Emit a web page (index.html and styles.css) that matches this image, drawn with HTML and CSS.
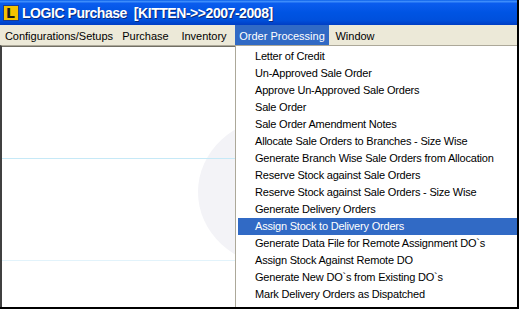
FILE: index.html
```html
<!DOCTYPE html>
<html lang="en">
<head>
    <meta charset="UTF-8">
    <title>LOGIC Purchase</title>
    <link rel="stylesheet" href="styles.css">
</head>
<body>
    <div class="window">
        <div class="title-bar">
            <div class="app-icon"><span>L</span></div>
            <span class="title-text">LOGIC Purchase&nbsp; [KITTEN-&gt;&gt;2007-2008]</span>
        </div>
        <div class="menu-bar">
            <div class="menu-item setups">Configurations/Setups</div>
            <div class="menu-item purchase">Purchase</div>
            <div class="menu-item inventory">Inventory</div>
            <div class="menu-item orders active">Order Processing</div>
            <div class="menu-item window-menu">Window</div>
        </div>
        <div class="client">
            <div class="watermark"></div>
            <div class="rule first"></div>
            <div class="rule second"></div>

            <ul class="dropdown">
                <li>Letter of Credit</li>
                <li>Un-Approved Sale Order</li>
                <li>Approve Un-Approved Sale Orders</li>
                <li>Sale Order</li>
                <li>Sale Order Amendment Notes</li>
                <li>Allocate Sale Orders to Branches - Size Wise</li>
                <li>Generate Branch Wise Sale Orders from Allocation</li>
                <li>Reserve Stock against Sale Orders</li>
                <li>Reserve Stock against Sale Orders - Size Wise</li>
                <li>Generate Delivery Orders</li>
                <li class="selected">Assign Stock to Delivery Orders</li>
                <li>Generate Data File for Remote Assignment DO`s</li>
                <li>Assign Stock Against Remote DO</li>
                <li>Generate New DO`s from Existing DO`s</li>
                <li>Mark Delivery Orders as Dispatched</li>
                <li>Cancel Un-Issued Sale Order Sizes</li>
            </ul>
        </div>
    </div>
</body>
</html>
```

FILE: styles.css
```css
* {
    margin: 0;
    padding: 0;
    box-sizing: border-box;
}

html,
body {
    width: 519px;
    height: 309px;
    overflow: hidden;
}

body {
    font-family: 'Liberation Sans', Arial, sans-serif;
    font-size: 11px;
    letter-spacing: -0.2px;
    background-color: #fff;
}

.window {
    width: 519px;
    height: 309px;
    display: flex;
    flex-direction: column;
    border-right: 2px solid #000;
    border-bottom: 2px solid #000;
    overflow: hidden;
}

/* Title bar */
.title-bar {
    height: 25px;
    display: flex;
    align-items: center;
    gap: 3px;
    padding-left: 3px;
    background: linear-gradient(to bottom, #0a5fe8 0%, #3c8cfb 6%, #0a5cee 14%, #0054e3 50%, #0050dc 80%, #003ec4 100%);
    flex-shrink: 0;
}

.app-icon {
    width: 16px;
    height: 16px;
    background-color: #f3c300;
    border: 1px solid #1c3b8f;
    display: flex;
    align-items: flex-end;
    padding-left: 2px;
}

.app-icon span {
    font-family: 'DejaVu Sans', sans-serif;
    font-weight: bold;
    font-size: 14px;
    line-height: 13px;
    letter-spacing: 0;
    color: #1a1a1a;
}

.title-text {
    color: #fff;
    font-family: 'Liberation Sans', Arial, sans-serif;
    font-weight: bold;
    font-size: 14px;
    letter-spacing: -0.45px;
    text-shadow: 1px 1px 0 #0a2a7a;
    white-space: nowrap;
}

/* Menu bar */
.menu-bar {
    height: 20px;
    display: flex;
    align-items: stretch;
    background-color: #ece9d8;
    flex-shrink: 0;
}

.menu-item {
    display: flex;
    align-items: center;
    justify-content: center;
    padding-top: 1px;
    color: #000;
    letter-spacing: 0;
    white-space: nowrap;
}

.menu-item.setups {
    width: 118px;
}

.menu-item.purchase {
    width: 55px;
}

.menu-item.inventory {
    width: 62px;
}

.menu-item.orders {
    width: 94px;
}

.menu-item.window-menu {
    width: 52px;
}

.menu-item.active {
    background-color: #316ac5;
    color: #fff;
}

/* Client area */
.client {
    flex: 1;
    position: relative;
    background-color: #fff;
    border-top: 1px solid #aca899;
    border-left: 2px solid #404040;
    box-shadow: inset 0 1px 0 #716f64;
    overflow: hidden;
}

.watermark {
    position: absolute;
    left: 196px;
    top: 72px;
    width: 160px;
    height: 148px;
    border-radius: 50%;
    background-color: #f3f3f7;
}

.rule {
    position: relative;
    height: 1px;
}

.rule.first {
    margin-top: 112px;
    background-color: #c6e9f7;
}

.rule.second {
    margin-top: 101px;
    background-color: #e2f3fb;
}

/* Drop-down menu */
.dropdown {
    position: absolute;
    left: 233px;
    top: -1px;
    right: 0;
    bottom: 0;
    list-style: none;
    background-color: #fff;
    border-left: 1px solid #aca899;
    padding: 3px 0 0 2px;
}

.dropdown li {
    height: 17px;
    line-height: 17px;
    padding-left: 17px;
    color: #000;
    white-space: nowrap;
}

.dropdown li.selected {
    background-color: #316ac5;
    color: #fff;
}
```
